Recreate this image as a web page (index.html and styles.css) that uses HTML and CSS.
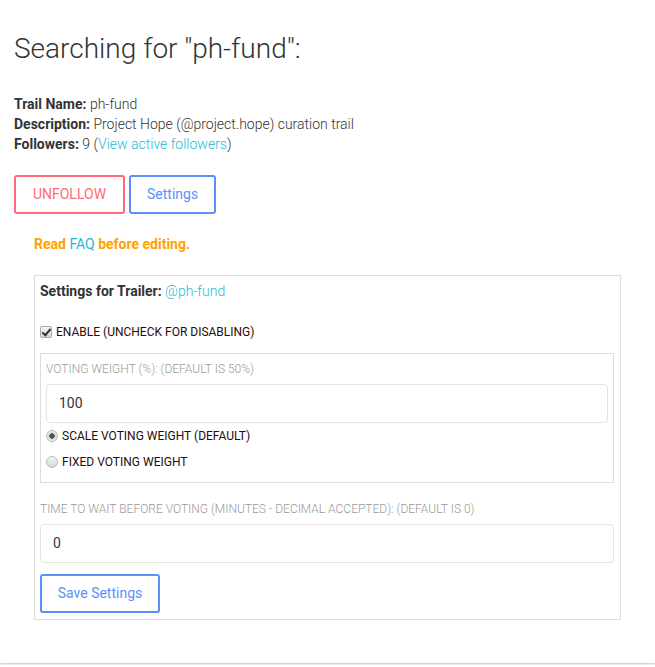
FILE: index.html
```html
<!DOCTYPE html>
<html lang="en">
<head>
  <meta charset="UTF-8">
  <meta name="viewport" content="width=device-width, initial-scale=1.0">
  <title>Trail search</title>
  <link rel="stylesheet" href="styles.css">
</head>
<body>
  <div class="card">
    <h1>Searching for "ph-fund":</h1>

    <div class="details">
      <p><b>Trail Name:</b> ph-fund</p>
      <p><b>Description:</b> Project Hope (@project.hope) curation trail</p>
      <p><b>Followers:</b> 9 (<a href="#">View active followers</a>)</p>
    </div>

    <div class="actions">
      <button class="btn btn-red">UNFOLLOW</button>
      <button class="btn btn-blue">Settings</button>
    </div>

    <p class="warning">Read <a href="#">FAQ</a> before editing.</p>

    <div class="settings">
      <p class="settings-title"><b>Settings for Trailer:</b> <a href="#">@ph-fund</a></p>

      <label class="check"><input type="checkbox" checked> ENABLE (UNCHECK FOR DISABLING)</label>

      <div class="group">
        <label class="field-label" for="weight">VOTING WEIGHT (%): (DEFAULT IS 50%)</label>
        <input class="field" type="text" id="weight" value="100">
        <label class="check radio-row"><input type="radio" name="mode" checked> SCALE VOTING WEIGHT (DEFAULT)</label>
        <label class="check radio-row"><input type="radio" name="mode"> FIXED VOTING WEIGHT</label>
      </div>

      <label class="field-label" for="wait">TIME TO WAIT BEFORE VOTING (MINUTES - DECIMAL ACCEPTED): (DEFAULT IS 0)</label>
      <input class="field" type="text" id="wait" value="0">

      <button class="btn btn-blue btn-save">Save Settings</button>
    </div>
  </div>
</body>
</html>
```

FILE: styles.css
```css
body {
  font-family: Roboto, Arial, sans-serif;
  font-weight: 300;
  margin: 0;
  padding: 0;
  background: #fff;
  color: #333;
}
a {
  color: #1cbbd8;
  text-decoration: none;
}
.card {
  background: white;
  box-shadow: 0 1px 2px rgba(0, 0, 0, 0.25);
  padding: 32px 14px 43px;
  margin-bottom: 2px;
}
h1 {
  font-size: 28px;
  font-weight: 300;
  margin: 0 0 28px;
  line-height: 1.2;
}
.details p {
  margin: 0;
  font-size: 14px;
  line-height: 20px;
}
b {
  font-weight: 700;
}
.actions {
  margin-top: 21px;
  display: flex;
  gap: 4px;
}
.btn {
  font-family: Roboto, Arial, sans-serif;
  font-weight: 400;
  background: white;
  font-size: 14px;
  height: 39px;
  padding: 0 16px;
  border-radius: 3px;
  cursor: pointer;
}
.btn-red {
  border: 2px solid #ff6b78;
  color: #ff6b78;
  width: 111px;
}
.btn-blue {
  border: 2px solid #5b8ff9;
  color: #5b8ff9;
  width: 87px;
}
.warning {
  margin: 20px 0 0 20px;
  font-size: 14px;
  line-height: 20px;
  font-weight: 700;
  color: #ffa200;
}
.warning a {
  font-weight: 400;
}
.settings {
  margin: 21px 20px 0;
  border: 1px solid #ddd;
  padding: 6px 6px 6px 5px;
}
.settings-title {
  margin: 0 0 20px;
  font-size: 14px;
  line-height: 18px;
}
.check {
  display: flex;
  align-items: center;
  font-size: 12px;
  font-weight: 400;
  color: #2a0a0a;
  height: 24px;
}
.radio-row {
  height: 26px;
}
.check input {
  margin: 0 4px 0 0;
  width: 12px;
  height: 12px;
  appearance: none;
  border: 1px solid #aaa;
  background: linear-gradient(#f4f4f4, #d8d8d8);
  box-sizing: border-box;
  flex: none;
}
.check input[type="checkbox"] {
  border-radius: 2px;
  position: relative;
}
.check input[type="checkbox"]:checked::after {
  content: "";
  position: absolute;
  left: 3px;
  top: 0;
  width: 3px;
  height: 7px;
  border: solid #333;
  border-width: 0 2px 2px 0;
  transform: rotate(40deg);
}
.check input[type="radio"] {
  border-radius: 50%;
  border-color: #bbb;
}
.check input[type="radio"]:checked {
  background: radial-gradient(circle, #555 0 2.5px, #e4e4e4 3px);
}
.group {
  border: 1px solid #ddd;
  padding: 5px 5px 7px;
  margin: 9px 0 17px;
}
.field-label {
  display: block;
  font-size: 12px;
  color: #9a9a9a;
  line-height: 18px;
  margin-bottom: 6px;
}
.group .field-label {
  margin-top: 1px;
}
.field {
  display: block;
  width: 100%;
  box-sizing: border-box;
  height: 39px;
  border: 1px solid #e3e3e3;
  border-radius: 4px;
  padding: 0 12px;
  font-family: Roboto, Arial, sans-serif;
  font-size: 14px;
  color: #333;
  margin-bottom: 0;
}
.btn-save {
  margin-top: 11px;
  width: 120px;
  padding: 0;
}
```
